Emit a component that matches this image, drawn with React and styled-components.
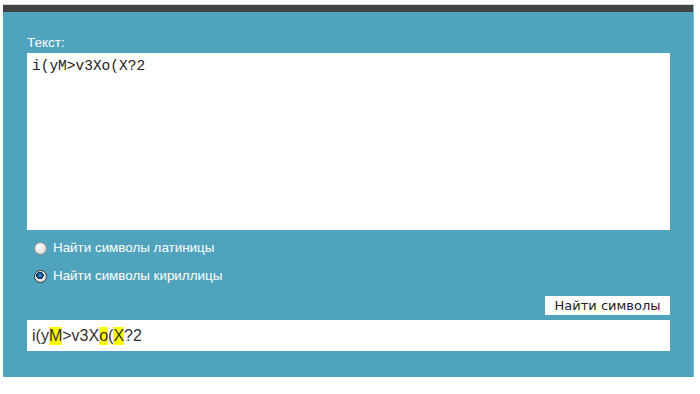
import React, { useState } from 'react';
import styled, { createGlobalStyle } from 'styled-components';

const GlobalStyle = createGlobalStyle`
    body {
        margin: 0;
        background: #fff;
        font-family: "Liberation Sans", Arial, sans-serif;
    }
`;

const Page = styled.div`
    padding: 4px 6px 0 3px;
`;

const Panel = styled.div`
    background: #4fa3bc;
    border-top: 1px solid #d6d6d6;
    box-shadow: inset 0 7px 0 #434343;
    border-right: 1px solid #7cbcd0;
    padding: 30px 23px 26px 24px;
`;

const Label = styled.div`
    color: #fff;
    font-size: 13.5px;
    line-height: 15px;
    margin-bottom: 3px;
`;

const TextArea = styled.textarea`
    display: block;
    box-sizing: border-box;
    width: 100%;
    height: 177px;
    border: none;
    margin: 0;
    padding: 6px 5px;
    resize: none;
    outline: none;
    font-family: "Liberation Mono", "Courier New", monospace;
    font-size: 14.5px;
    line-height: 15px;
    color: #222;
`;

const Options = styled.div`
    display: flex;
    flex-direction: column;
    gap: 10px;
    padding: 9px 0 0 7px;
`;

const Option = styled.label`
    display: flex;
    align-items: center;
    gap: 6px;
    color: #fff;
    font-size: 13.4px;
    line-height: 18px;
    cursor: pointer;
`;

const Radio = styled.input`
    appearance: none;
    width: 13px;
    height: 13px;
    margin: 0;
    border-radius: 50%;
    border: 1px solid #8c8c8c;
    box-sizing: border-box;
    background: radial-gradient(circle at 40% 35%, #ffffff 0%, #eaeaea 45%, #c4c4c4 100%);

    &:checked {
        border-color: #3a3a3a;
        background:
            radial-gradient(circle at 45% 40%, #3f9fe0 0%, #0d4f86 28%, #06263f 40%, transparent 43%),
            radial-gradient(circle, #f4f4f4 0%, #d8d8d8 100%);
    }
`;

const Actions = styled.div`
    display: flex;
    justify-content: flex-end;
    margin-top: 11px;
`;

const Button = styled.button`
    height: 19px;
    width: 125px;
    padding: 0;
    border: none;
    background: #fff;
    color: #222;
    font-family: Tahoma, "DejaVu Sans", Verdana, sans-serif;
    font-size: 13px;
    line-height: 19px;
    cursor: pointer;
`;

const Result = styled.div`
    margin-top: 5px;
    height: 31px;
    box-sizing: border-box;
    background: #fff;
    padding: 0 5px;
    display: flex;
    align-items: center;
    font-size: 16px;
    color: #333;
`;

const Mark = styled.span`
    background: #ffff00;
`;

const App = () => {
    const [mode, setMode] = useState('cyr');
    const parts = ['i(y', 'M', '>v3X', 'o', '(', 'X', '?2'];

    return (
        <Page>
            <GlobalStyle />
            <Panel>
                <Label>Текст:</Label>
                <TextArea defaultValue="i(yM>v3Xo(X?2" />
                <Options>
                    <Option>
                        <Radio type="radio" name="mode" checked={mode === 'lat'} onChange={() => setMode('lat')} />
                        Найти символы латиницы
                    </Option>
                    <Option>
                        <Radio type="radio" name="mode" checked={mode === 'cyr'} onChange={() => setMode('cyr')} />
                        Найти символы кириллицы
                    </Option>
                </Options>
                <Actions>
                    <Button>Найти символы</Button>
                </Actions>
                <Result>
                    {parts.map((p, i) => (i % 2 ? <Mark key={i}>{p}</Mark> : <span key={i}>{p}</span>))}
                </Result>
            </Panel>
        </Page>
    );
};

export default App;
